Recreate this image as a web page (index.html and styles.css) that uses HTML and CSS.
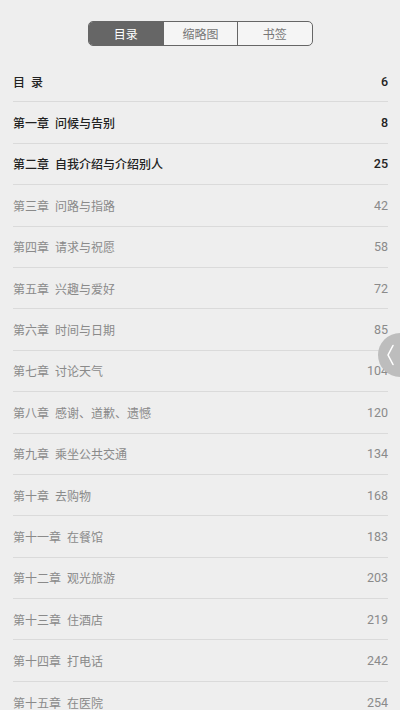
FILE: index.html
```html
<!DOCTYPE html>
<html lang="zh">
<head>
<meta charset="utf-8">
<link rel="stylesheet" href="styles.css">
</head>
<body>
<div class="page">
  <div class="tabbar">
    <div class="segments">
      <div class="seg active">目录</div>
      <div class="seg">缩略图</div>
      <div class="seg">书签</div>
    </div>
  </div>
  <ul class="toc">
    <li class="row strong"><span class="title"><span>目</span><span>录</span></span><span class="num">6</span></li>
    <li class="row strong"><span class="title"><span>第一章</span><span>问候与告别</span></span><span class="num">8</span></li>
    <li class="row strong"><span class="title"><span>第二章</span><span>自我介绍与介绍别人</span></span><span class="num">25</span></li>
    <li class="row"><span class="title"><span>第三章</span><span>问路与指路</span></span><span class="num">42</span></li>
    <li class="row"><span class="title"><span>第四章</span><span>请求与祝愿</span></span><span class="num">58</span></li>
    <li class="row"><span class="title"><span>第五章</span><span>兴趣与爱好</span></span><span class="num">72</span></li>
    <li class="row"><span class="title"><span>第六章</span><span>时间与日期</span></span><span class="num">85</span></li>
    <li class="row"><span class="title"><span>第七章</span><span>讨论天气</span></span><span class="num">104</span></li>
    <li class="row"><span class="title"><span>第八章</span><span>感谢、道歉、遗憾</span></span><span class="num">120</span></li>
    <li class="row"><span class="title"><span>第九章</span><span>乘坐公共交通</span></span><span class="num">134</span></li>
    <li class="row"><span class="title"><span>第十章</span><span>去购物</span></span><span class="num">168</span></li>
    <li class="row"><span class="title"><span>第十一章</span><span>在餐馆</span></span><span class="num">183</span></li>
    <li class="row"><span class="title"><span>第十二章</span><span>观光旅游</span></span><span class="num">203</span></li>
    <li class="row"><span class="title"><span>第十三章</span><span>住酒店</span></span><span class="num">219</span></li>
    <li class="row"><span class="title"><span>第十四章</span><span>打电话</span></span><span class="num">242</span></li>
    <li class="row"><span class="title"><span>第十五章</span><span>在医院</span></span><span class="num">254</span></li>
  </ul>
  <div class="handle">
    <svg width="44" height="44" viewBox="0 0 44 44"><path d="M15 12.5 L10 22 L15 31.5" fill="none" stroke="#fff" stroke-width="1.6" stroke-linecap="round" stroke-linejoin="round"/></svg>
  </div>
</div>
</body>
</html>
```
FILE: styles.css
```css
html, body {
  margin: 0;
  padding: 0;
}
body {
  background: #eeeeee;
  font-family: "Noto Sans CJK SC", "Noto Sans", sans-serif;
}
.page {
  position: relative;
  width: 400px;
  height: 710px;
  overflow: hidden;
  background: #eeeeee;
}
.tabbar {
  display: flex;
  justify-content: center;
  padding-top: 21px;
}
.segments {
  display: grid;
  grid-template-columns: 1fr 1fr 1fr;
  width: 225px;
  height: 25px;
  box-sizing: border-box;
  border: 1px solid #666;
  border-radius: 5px;
  overflow: hidden;
  background: #f5f5f5;
}
.seg {
  display: flex;
  align-items: center;
  justify-content: center;
  font-size: 12px;
  color: #777;
  border-left: 1px solid #666;
}
.seg:first-child {
  border-left: none;
}
.seg.active {
  background: #666;
  color: #fff;
}
.toc {
  list-style: none;
  margin: 15px 0 0 0;
  padding: 0 12px 0 13px;
}
.row {
  height: 41.4px;
  box-sizing: border-box;
  border-bottom: 1px solid #dadada;
  display: flex;
  align-items: center;
  justify-content: space-between;
  font-size: 12px;
  color: #8a8a8a;
}
.row.strong {
  color: #222;
  font-weight: 500;
}
.row.strong .num {
  font-weight: 500;
}
.title {
  display: flex;
  gap: 6px;
}
.num {
  font-family: Roboto, "Liberation Sans", sans-serif;
  font-size: 12.5px;
}
.handle {
  position: absolute;
  right: -22px;
  top: 333px;
  width: 44px;
  height: 44px;
  border-radius: 50%;
  background: #bdbdbd;
}
.handle svg {
  display: block;
}
```
